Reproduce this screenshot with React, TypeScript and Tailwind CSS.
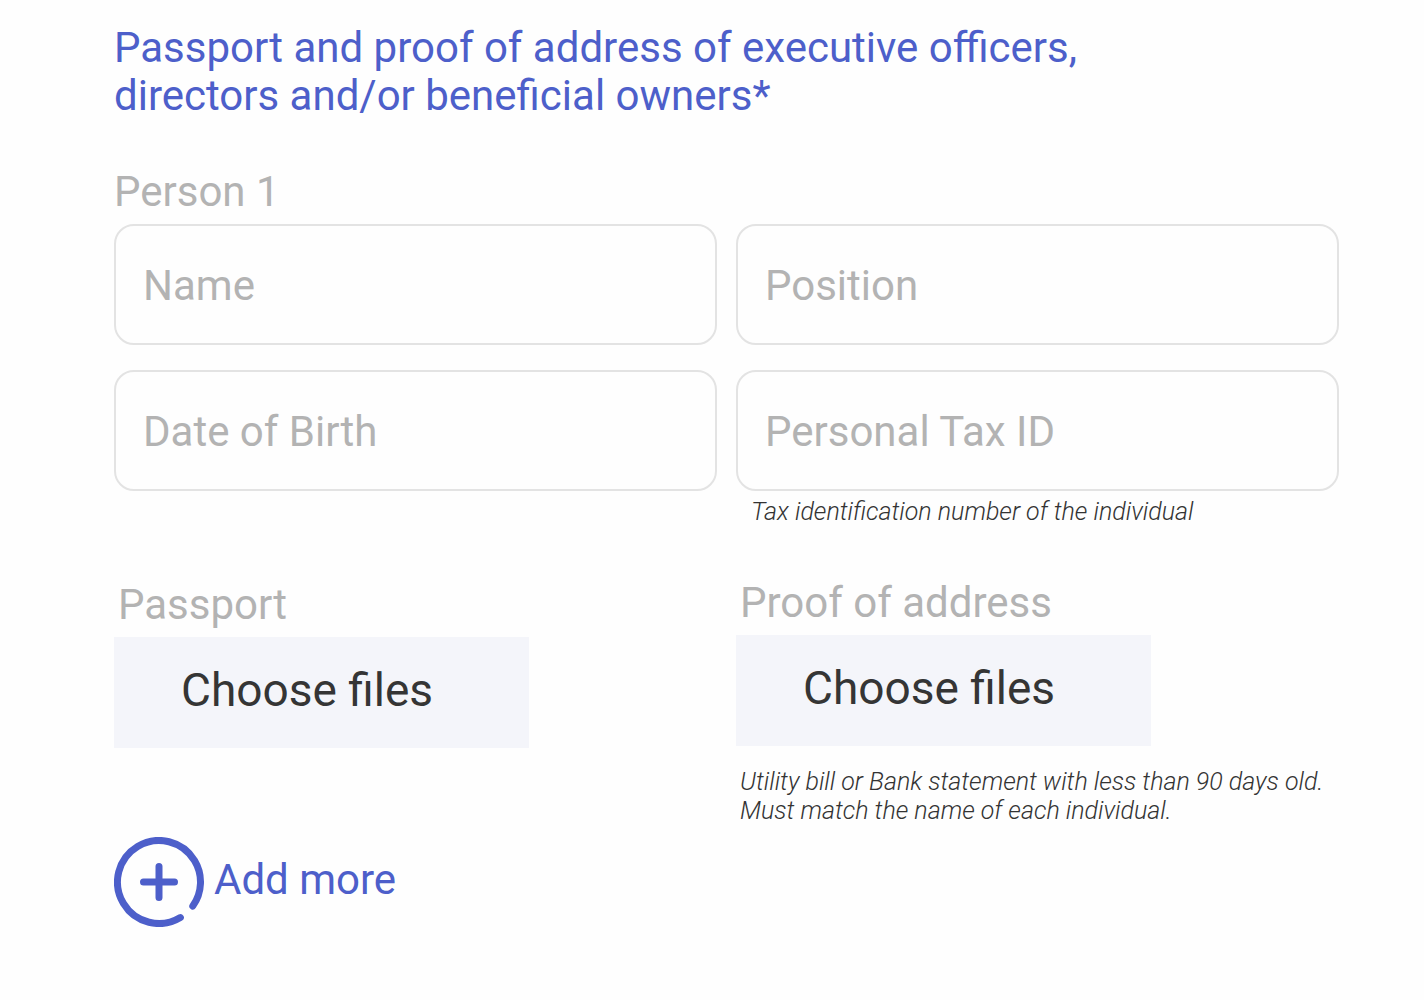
import React from "react";

function Field({ label, hint }: { label: string; hint?: string }) {
  const id = label.toLowerCase().replace(/ /g, "-");
  return (
    <div>
      <input
        id={id}
        type="text"
        aria-label={label}
        placeholder={label}
        className="block h-[121px] w-full rounded-[20px] border-2 border-[#e3e3e3] bg-transparent px-[27px] pt-0.5 text-[42px] text-[#333] placeholder:text-[#b3b3b3] placeholder:opacity-100"
      />
      {hint && <p className="mt-1.5 pl-[15px] text-[25px] leading-[29px] font-light text-[#333] italic">{hint}</p>}
    </div>
  );
}

function Upload({ label, hint, className }: { label: string; hint?: string; className: string }) {
  return (
    <div className={className}>
      <h3 className="pl-1 text-[42px] leading-12 text-[#b3b3b3]">{label}</h3>
      <button
        type="button"
        aria-label={`Choose files: ${label}`}
        className="mt-2 flex h-[111px] w-[415px] max-w-full items-center bg-[#f4f5fa] pb-1 pl-[67px] text-[46px] text-[#353535]"
      >
        Choose files
      </button>
      {hint && <p className="mt-[21px] pl-1 text-[25px] leading-[29px] font-light whitespace-pre-line text-[#333] italic">{hint}</p>}
    </div>
  );
}

export default function App() {
  return (
    <main className="min-h-screen bg-[#fefefe] pt-6 pr-[85px] pb-12 pl-[114px] font-[Roboto,sans-serif]">
      <h1 className="max-w-[1000px] text-[42px] leading-12 text-[#4d5fca]">
        Passport and proof of address of executive officers, directors and/or beneficial owners*
      </h1>
      <h2 className="mt-12 text-[42px] leading-12 text-[#b3b3b3]">Person 1</h2>
      <div className="mt-2 grid grid-cols-2 gap-x-[19px] gap-y-[25px]">
        <Field label="Name" />
        <Field label="Position" />
        <Field label="Date of Birth" />
        <Field label="Personal Tax ID" hint="Tax identification number of the individual" />
      </div>
      <div className="mt-[53px] grid grid-cols-2 gap-x-[19px]">
        <Upload label="Passport" className="pt-0.5" />
        <Upload
          label="Proof of address"
          className="pt-0"
          hint={"Utility bill or Bank statement with less than 90 days old.\nMust match the name of each individual."}
        />
      </div>
      <button type="button" className="mt-3 flex items-center gap-[10px] text-[42px] leading-12 text-[#4d5fca]">
        <svg width="90" height="90" viewBox="0 0 90 90" fill="none" stroke="currentColor" strokeWidth="7" strokeLinecap="round" aria-hidden="true">
          <circle cx="45" cy="45" r="41.5" strokeDasharray="243.3 17.5" transform="rotate(59 45 45)" />
          <path d="M45 29.5v31M29.5 45h31" />
        </svg>
        <span className="pb-1">Add more</span>
      </button>
    </main>
  );
}
